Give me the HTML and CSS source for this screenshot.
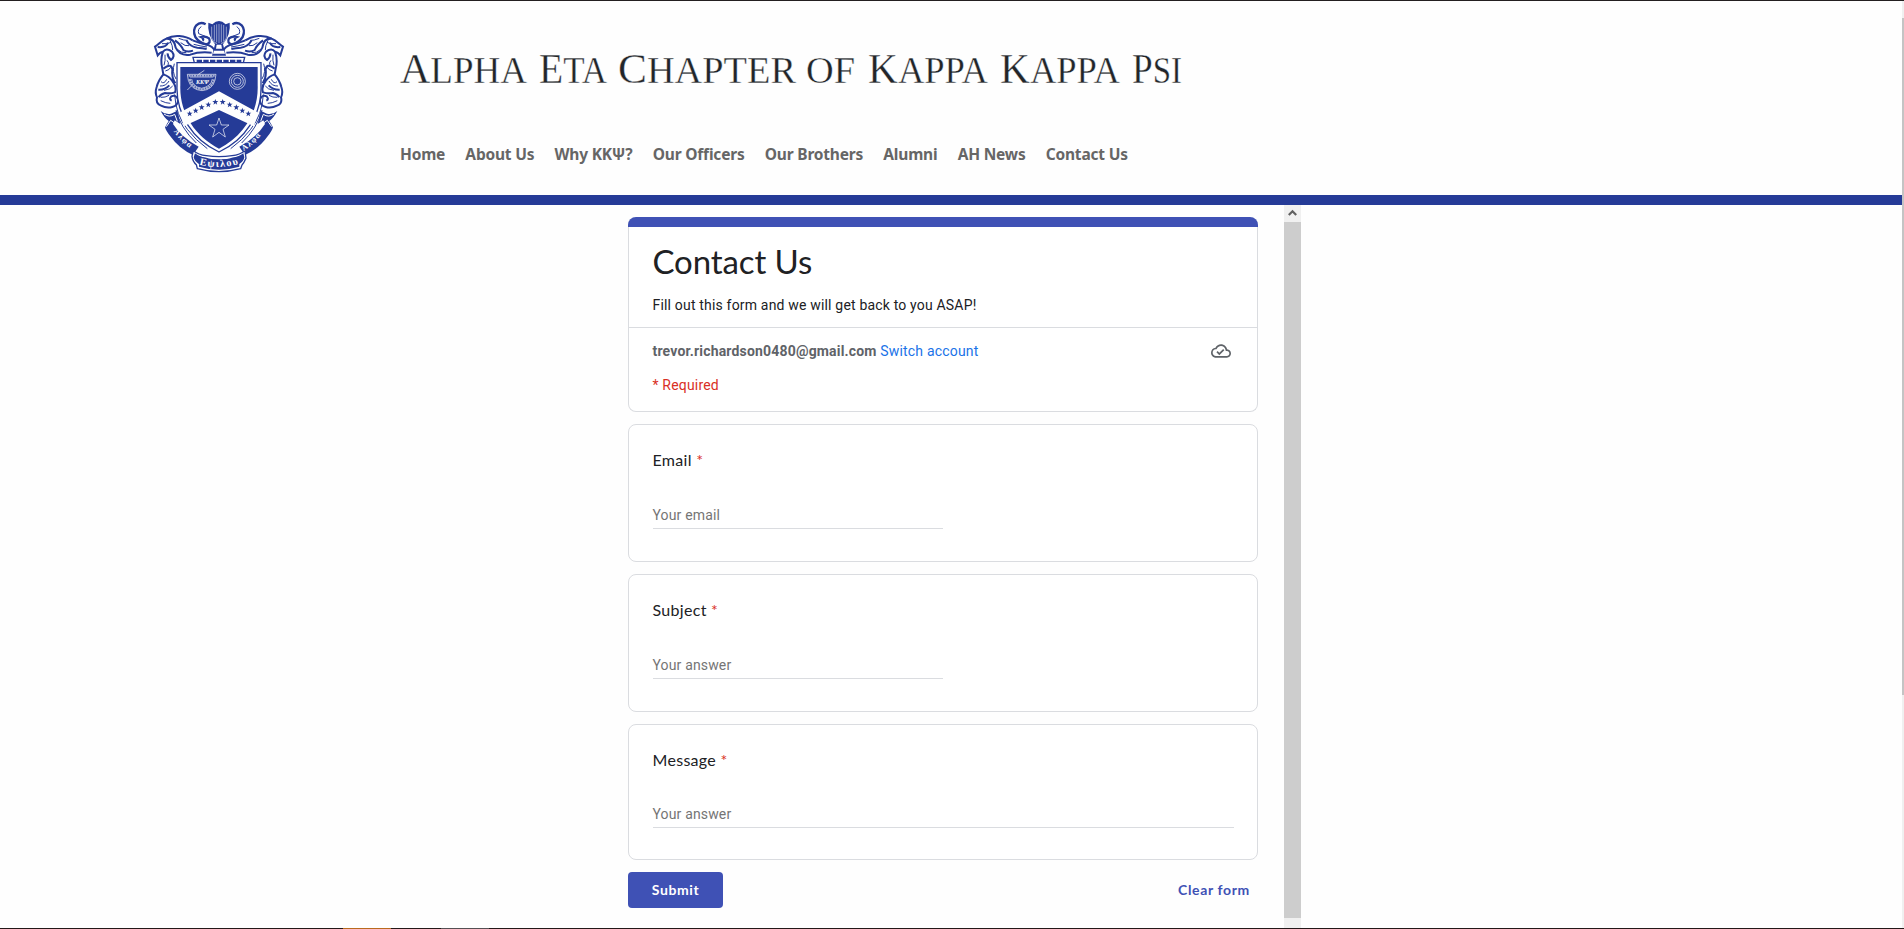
FILE: index.html
```html
<!DOCTYPE html>
<html lang="en">
<head>
<meta charset="utf-8">
<title>Alpha Eta Chapter of Kappa Kappa Psi</title>
<link rel="stylesheet" href="styles.css">
</head>
<body>
<div class="page">
  <div class="content">
    <header class="header">
      <svg class="crest" viewBox="0 0 480 510" aria-label="Kappa Kappa Psi crest">
        <defs>
          <path id="star" d="M0-9 2.3-3 9-3 3.7 1.2 5.6 8 0 4-5.6 8-3.7 1.2-9-3-2.3-3z"/>
          <g id="scroll">
            <path class="leaf" d="M158 91C135 76 101 73 79 86C64 92 57 103 45 110L53 136Q60 126 69 125Q60 150 67 176L70 193Q54 213 50 231Q44 248 51 262Q46 281 63 287Q80 296 97 291Q115 286 114 268Q108 253 94 259Q86 268 95 272M69 125Q79 112 96 125Q107 139 93 150Q82 140 83 130"/>
            <path class="leaf" d="M158 91Q178 99 196 103Q220 108 226 126M79 86Q103 84 107 113Q119 139 151 134Q177 124 215 128M105 91Q124 105 130 120Q142 128 159 122M139 91Q150 111 172 113Q187 114 200 117M53 111Q78 114 84 98M70 176Q94 158 97 178Q94 202 106 220M70 193Q88 199 97 213Q111 230 105 247Q91 252 75 249Q62 252 56 262M55 239Q75 240 88 226"/>
            <path class="thin-line" d="M66 101Q82 103 93 97M90 91Q99 109 98 120M116 85Q133 92 143 91M122 98Q136 110 147 107M112 118Q124 130 139 128M75 134Q77 153 72 166M81 151Q88 158 84 166M76 183Q89 180 92 172M63 215Q72 224 80 208M60 228Q78 229 87 213M62 272Q78 280 91 280M62 262Q76 263 87 256M103 161Q95 185 108 207M98 228Q91 239 72 241M161 103Q180 108 201 111"/>
            <path class="thick-line" d="M197 43Q181 34 169 46Q157 60 166 81Q178 99 199 103Q214 100 207 85Q197 77 183 81Q193 86 188 92"/>
            <path class="thin-line" d="M184 50Q172 57 176 71L203 82"/>
            <path class="solid" d="M62 303Q76 315 93 311L112 302L121 342L104 331L99 342Q124 382 176 410L159 435Q118 417 91 379Q78 363 75 352L86 333Q73 324 62 303Z"/>
            <path class="white-line" d="M72 312Q88 324 104 313L112 334M79 350 92 331 102 338"/>
            <path class="thin-line" d="M104 253Q107 315 142 358Q166 390 202 416M108 300Q121 353 169 399"/>
          </g>
        </defs>
        <use href="#scroll"/>
        <use href="#scroll" transform="translate(474 0) scale(-1 1)"/>
        <path class="solid" d="M217 43Q237 23 257 43L269 38Q273 73 249 103L258 137H216L225 103Q201 73 205 38Z"/>
        <path class="lyre-line" d="M215 50V84Q222 101 231 101M259 50V84Q252 101 243 101M223 45V94M230 43V97M237 42V99M244 43V97M251 45V94M222 126H252"/>
        <path class="white" d="M230 104H244L246 116H228ZM222 122H252L255 131H219Z"/>
        <path class="shape" d="M159 142H314L309 162H164Z"/>
        <path class="rope" d="M170 153H304"/>
        <path class="shape" d="M111 158H363V228C366 313 315 390 237 426C159 390 108 313 111 228Z"/>
        <path class="solid" d="M121 171H353V226C356 310 309 378 237 416C165 378 118 310 121 226Z"/>
        <path class="white" d="M121 307 237 244 353 307 342 349 237 300 131 349Z"/>
        <use class="solid" href="#star" x="149" y="311"/><use class="solid" href="#star" x="167" y="302"/><use class="solid" href="#star" x="185" y="292"/><use class="solid" href="#star" x="205" y="284"/><use class="solid" href="#star" x="226" y="276"/><use class="solid" href="#star" x="248" y="276"/><use class="solid" href="#star" x="269" y="284"/><use class="solid" href="#star" x="289" y="292"/><use class="solid" href="#star" x="307" y="302"/><use class="solid" href="#star" x="325" y="311"/>
        <path class="fine-line" d="M237 324 244 345H267L249 358 256 381 237 367 218 381 225 358 207 345H230Z"/>
        <circle class="fine-line" cx="292" cy="214" r="24"/><circle class="fine-line" cx="292" cy="214" r="18"/><circle class="fine-line" cx="292" cy="214" r="11"/>
        <path class="fine-line" d="M142 193H228L225 210Q218 239 186 242Q153 239 145 211ZM150 201H220M155 207Q157 230 185 235Q214 229 217 207M142 240 155 227M174 194 193 181"/>
        <path class="bowl-edge" d="M146 197H225M149 207Q154 234 186 238Q217 235 222 207"/>
        <text class="cup-text" x="168" y="223">ΚΚΨ</text>
        <path class="shape" d="M160 422Q175 434 199 437Q237 443 276 437Q300 434 315 422L318 445Q312 459 306 465L302 476Q237 494 172 476L169 464Q158 455 156 439Z"/>
        <path class="solid" d="M165 430Q180 442 203 444L203 454 177 462Q164 454 161 442ZM310 430Q295 442 272 444L272 454 298 462Q311 454 313 442Z"/>
        <path class="solid" d="M177 439Q237 457 298 439L298 470Q237 488 177 470Z"/>
        <path id="motto-left" class="no-fill" d="M101 364Q122 398 164 423"/>
        <path id="motto-mid" class="no-fill" d="M178 464Q237 480 300 461"/>
        <path id="motto-right" class="no-fill" d="M311 423Q352 397 376 356"/>
        <text class="motto"><textPath href="#motto-left">Αλφα</textPath></text>
        <text class="motto big"><textPath href="#motto-mid">Εψιλου</textPath></text>
        <text class="motto"><textPath href="#motto-right">Αλφα</textPath></text>
      </svg>
      <div class="masthead">
        <h1 class="site-title">
          <svg class="title-text" viewBox="0 0 800 50">
            <text x="0" y="39" textLength="127" lengthAdjust="spacingAndGlyphs"><tspan class="cap">A</tspan>LPHA</text>
            <text x="139" y="39" textLength="68" lengthAdjust="spacingAndGlyphs"><tspan class="cap">E</tspan>TA</text>
            <text x="218" y="39" textLength="178" lengthAdjust="spacingAndGlyphs"><tspan class="cap">C</tspan>HAPTER</text>
            <text x="406" y="39" textLength="49" lengthAdjust="spacingAndGlyphs">OF</text>
            <text x="468" y="39" textLength="120" lengthAdjust="spacingAndGlyphs"><tspan class="cap">K</tspan>APPA</text>
            <text x="600" y="39" textLength="120" lengthAdjust="spacingAndGlyphs"><tspan class="cap">K</tspan>APPA</text>
            <text x="732" y="39" textLength="50" lengthAdjust="spacingAndGlyphs"><tspan class="cap">P</tspan>SI</text>
          </svg>
        </h1>
        <nav class="nav">
          <a>Home</a><a>About Us</a><a>Why ΚΚΨ?</a><a>Our Officers</a><a>Our Brothers</a><a>Alumni</a><a>AH News</a><a>Contact Us</a>
        </nav>
      </div>
    </header>
    <main class="frame">
      <form class="form">
        <section class="card intro">
          <div class="intro-top">
            <h2 class="form-title">Contact Us</h2>
            <p class="description">Fill out this form and we will get back to you ASAP!</p>
          </div>
          <div class="account">
            <span><b>trevor.richardson0480@gmail.com</b> <a class="switch">Switch account</a></span>
            <svg class="cloud" viewBox="0 0 24 24"><path d="M19.35 10.04C18.67 6.59 15.64 4 12 4 9.11 4 6.6 5.64 5.35 8.04 2.34 8.36 0 10.91 0 14c0 3.31 2.69 6 6 6h13c2.76 0 5-2.24 5-5 0-2.64-2.05-4.78-4.65-4.96zM19 18H6c-2.21 0-4-1.79-4-4 0-2.05 1.53-3.76 3.56-3.97l1.07-.11.5-.95C8.08 7.14 9.94 6 12 6c2.62 0 4.88 1.86 5.39 4.43l.3 1.5 1.53.11c1.56.1 2.78 1.41 2.78 2.96 0 1.65-1.35 3-3 3zm-9-3.82-2.09-2.09L6.5 13.5 10 17l6.01-6.01-1.41-1.41z"/></svg>
          </div>
          <p class="required">* Required</p>
        </section>
        <section class="card question"><label class="label">Email <i>*</i></label><div class="field">Your email</div></section>
        <section class="card question"><label class="label">Subject <i>*</i></label><div class="field">Your answer</div></section>
        <section class="card question long"><label class="label">Message <i>*</i></label><div class="field">Your answer</div></section>
        <div class="actions"><button class="submit" type="button">Submit</button><a class="clear">Clear form</a></div>
      </form>
      <div class="scrollbar">
        <svg class="arrow" viewBox="0 0 17 17"><path d="M4.8 10 8.5 6.3 12.2 10"/></svg>
        <div class="thumb"></div>
      </div>
    </main>
  </div>
  <div class="page-scrollbar"><div class="page-thumb"></div></div>
</div>
<div class="taskbar"><span class="app-active"></span><span class="app-idle"></span></div>
</body>
</html>
```
FILE: styles.css
```css
* { box-sizing: border-box; }
body { margin: 0; height: 929px; overflow: hidden; background: #fefefe; border-top: 1px solid #231f20; font-family: Roboto, sans-serif; color: #202124; }
h1, h2, p { margin: 0; font-weight: 400; }
.page { display: flex; height: 927px; }
.content { flex: 1; display: flex; flex-direction: column; }
.header { display: flex; height: 204px; padding: 9px 0 0 140px; border-bottom: 10px solid #253b97; flex: none; }
.crest { width: 160px; height: 170px; }
.solid { fill: #253b97; }
.white { fill: #fefefe; }
.shape { fill: #fefefe; stroke: #253b97; stroke-width: 4; }
.leaf { fill: none; stroke: #253b97; stroke-width: 6; }
.white-line { fill: none; stroke: #fefefe; stroke-width: 3; }
.fine-line { fill: none; stroke: #fefefe; stroke-width: 2; }
.lyre-line { fill: none; stroke: #fefefe; stroke-width: 1.5; }
.bowl-edge { fill: none; stroke: #a8b1d5; stroke-width: 7; stroke-dasharray: 6 2; }
.thin-line { fill: none; stroke: #253b97; stroke-width: 3; }
.thick-line { fill: none; stroke: #253b97; stroke-width: 7; }
.rope { stroke: #253b97; stroke-width: 7; stroke-dasharray: 16 4; }
.no-fill { fill: none; }
.cup-text { fill: #fefefe; font: bold italic 18px "Liberation Serif", serif; }
.motto { fill: #fefefe; font: bold 24px "Liberation Serif", serif; letter-spacing: 4px; }
.big { font-size: 31px; }
.masthead { padding: 34px 0 0 100px; }
.site-title { height: 50px; }
.title-text { display: block; width: 800px; height: 50px; overflow: visible; fill: #212529; stroke: #fefefe; stroke-width: .35; font: 38px "Liberation Serif", serif; }
.cap { font-size: 43px; }
.nav { display: flex; gap: 20.2px; margin-top: 48px; font: bold 15.5px/24px "Noto Sans", sans-serif; letter-spacing: -.19px; color: #666; white-space: nowrap; }
.frame { display: flex; width: 700px; height: 723px; margin-left: 601px; }
.form { flex: 1; padding: 12px 26px 0 27px; display: flex; flex-direction: column; gap: 12px; }
.card { width: 630px; border: 1px solid #dadce0; border-radius: 8px; background: #fff; flex: none; }
.intro { position: relative; height: 195px; padding-top: 10px; border-top: 0; font-size: 14px; line-height: 20px; letter-spacing: .18px; }
.intro::before { content: ""; position: absolute; top: 0; left: -1px; right: -1px; height: 10px; border-radius: 8px 8px 0 0; background: #3f51b5; }
.intro-top { height: 101px; padding: 13px 23.5px 0; border-bottom: 1px solid #dadce0; }
.form-title { font: 33px/42px Lato, sans-serif; letter-spacing: -.1px; }
.description { margin-top: 13px; }
.account { display: flex; justify-content: space-between; align-items: center; height: 20px; margin: 13px 26px 0 23.5px; color: #5f6368; }
.switch { color: #1a73e8; }
.cloud { width: 20px; height: 20px; fill: #5f6368; }
.required { margin: 14px 23.5px; color: #d93025; }
.question { height: 138px; padding: 23px 24px 0; }
.label { display: block; font: 16px/24px Lato, sans-serif; letter-spacing: .3px; text-indent: -.5px; }
.label i { color: #d93025; font-style: normal; }
.field { width: 290px; height: 25px; margin-top: 32px; padding-top: 1px; border-bottom: 1px solid #dadce0; color: #757575; font-size: 14px; line-height: 20px; letter-spacing: .15px; text-indent: -.5px; }
.long { height: 136px; }
.long .field { width: 581px; height: 26px; margin-top: 30px; padding-top: 2px; }
.actions { display: flex; justify-content: space-between; align-items: center; width: 630px; height: 36px; padding-right: 8px; }
.submit { width: 95px; height: 36px; padding: 0 0 2px; border: 0; border-radius: 4px; background: #3f51b5; color: #fff; font: bold 14px Lato, sans-serif; letter-spacing: .6px; }
.clear { padding-bottom: 2px; color: #3f51b5; font: bold 14px Lato, sans-serif; letter-spacing: .65px; }
.scrollbar { width: 17px; background: #f0f0f0; }
.arrow { display: block; width: 17px; height: 17px; fill: none; stroke: #606060; stroke-width: 2.2; }
.thumb { height: 696px; background: #cdcdcd; }
.page-scrollbar { width: 2px; padding-top: 17px; background: #f0f0f0; }
.page-thumb { height: 677px; background: #c4c4c4; }
.taskbar { display: flex; height: 1px; padding-left: 343px; gap: 50px; background: #231819; }
.app-active { width: 48px; background: #b96a1e; }
.app-idle { width: 48px; background: #555053; }
```
